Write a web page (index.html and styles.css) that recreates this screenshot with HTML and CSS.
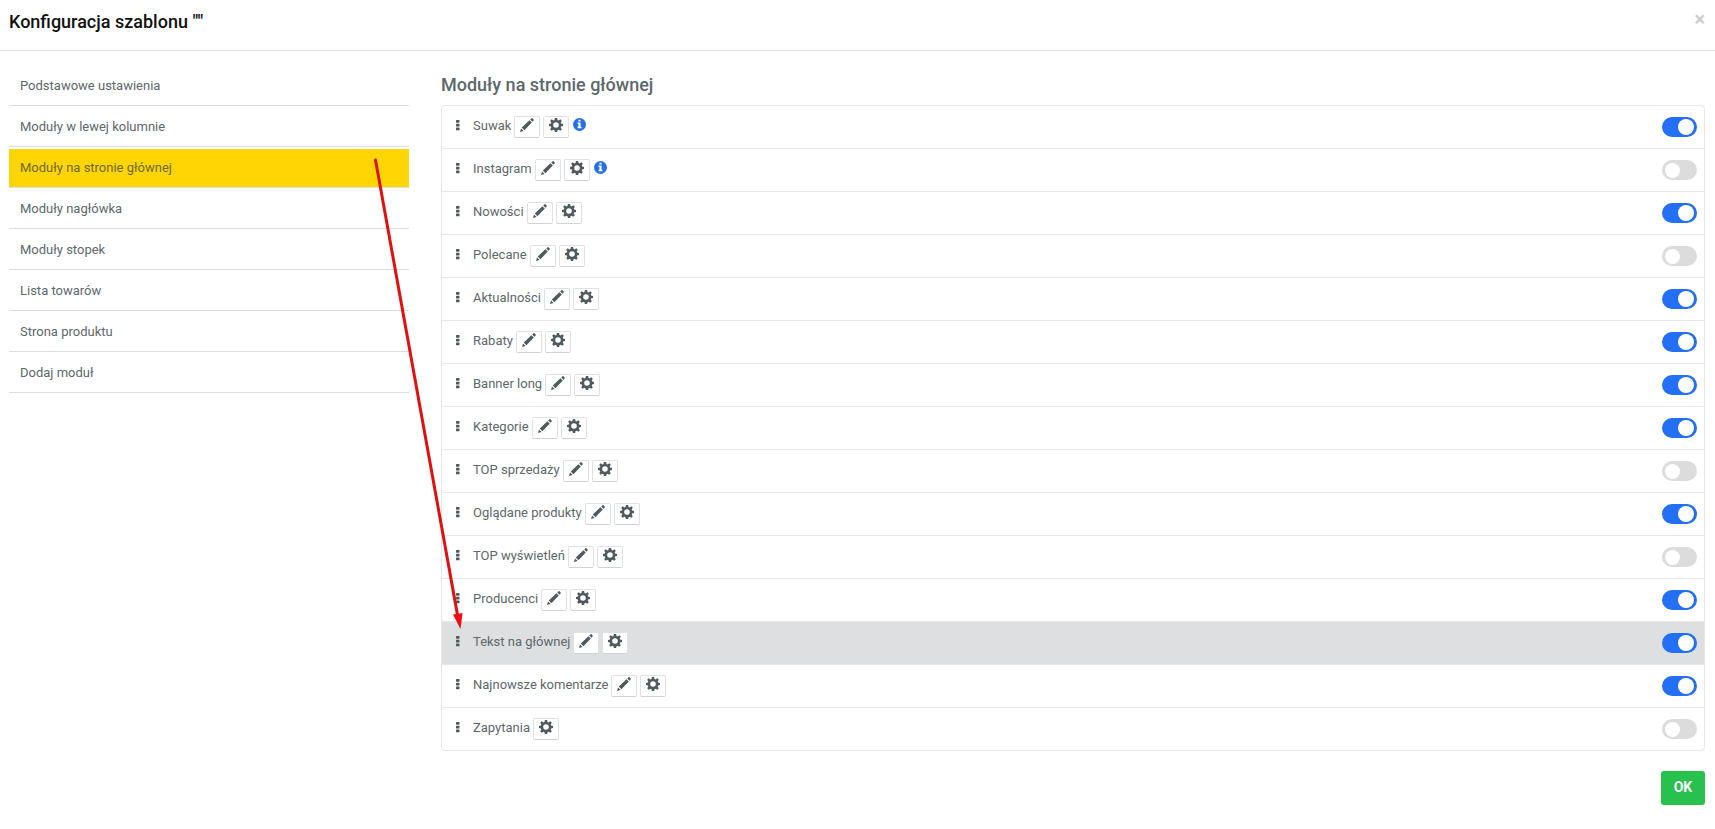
FILE: index.html
```html
<!DOCTYPE html>
<html lang="pl">
  <head>
    <meta charset="UTF-8" />
    <meta name="viewport" content="width=device-width, initial-scale=1.0" />
    <title>Konfiguracja szablonu</title>
    <link rel="stylesheet" href="styles.css">
  </head>
  <body>
    <!-- icons -->
    <svg class="sprite" aria-hidden="true">
      <symbol id="i-drag" viewBox="0 0 4 12">
        <rect x="0" y="1" width="3.500" height="2.700" rx=".6" />
        <rect x="0" y="4.800" width="3.500" height="2.700" rx=".6" />
        <rect x="0" y="8.600" width="3.500" height="2.700" rx=".6" />
      </symbol>
      <symbol id="i-pencil" viewBox="0 0 14 14">
        <path d="M0 14l1-3.6 2.6 2.6zM1.8 9.4l7.6-7.2 2.4 2.4-7.4 7.6zM10.2 1.5l1.2-1.1c.4-.4.8-.4 1.2 0l1 1c.4.4.4.8 0 1.2l-1.1 1.2z" />
      </symbol>
      <symbol id="i-gear" viewBox="0 0 14 14">
        <path fill-rule="evenodd" d="M5.9 0h2.2l.4 1.9 1.1.5 1.7-1.1 1.5 1.5-1.1 1.7.4 1.1 1.9.4v2.1l-1.9.4-.4 1.1 1.1 1.7-1.5 1.5-1.7-1.1-1.1.5L8.1 14H5.9l-.4-1.8-1.1-.5-1.7 1.1-1.5-1.5 1.100-1.700-.4-1.100L0 8.100V6l1.900-.4.4-1.100-1.100-1.700 1.500-1.500 1.700 1.100 1.100-.5zM7 4.200a2.800 2.800 0 1 0 0 5.600 2.800 2.800 0 0 0 0-5.600z" />
      </symbol>
      <symbol id="i-info" viewBox="0 0 12 12">
        <circle cx="6" cy="6" r="6" />
        <path fill="#fff" d="M5 1.500h2v1.700H5zM4.200 4.200H7v3.900h.8v1.400H4.200V8.100H5V5.600h-.8z" />
      </symbol>
    </svg>

    <header class="modal-header">
      <h1>Konfiguracja szablonu ""</h1>
      <button class="close" type="button" aria-label="Zamknij">×</button>
    </header>

    <main class="modal-body">
      <nav class="side-menu">
        <a href="#podstawowe">Podstawowe ustawienia</a>
        <a href="#lewa-kolumna">Moduły w lewej kolumnie</a>
        <a class="active" href="#strona-glowna">Moduły na stronie głównej</a>
        <a href="#naglowek">Moduły nagłówka</a>
        <a href="#stopka">Moduły stopek</a>
        <a href="#lista">Lista towarów</a>
        <a href="#produkt">Strona produktu</a>
        <a href="#dodaj">Dodaj moduł</a>
      </nav>

      <section class="modules">
        <h2>Moduły na stronie głównej</h2>
        <ul class="module-list">
          <li>
            <svg class="drag"><use href="#i-drag" /></svg>
            <label for="m1">Suwak</label>
            <button class="btn-icon" type="button" aria-label="Edytuj"><svg><use href="#i-pencil" /></svg></button>
            <button class="btn-icon" type="button" aria-label="Ustawienia"><svg><use href="#i-gear" /></svg></button>
            <svg class="info"><use href="#i-info" /></svg>
            <input class="switch" type="checkbox" id="m1" checked />
          </li>
          <li>
            <svg class="drag"><use href="#i-drag" /></svg>
            <label for="m2">Instagram</label>
            <button class="btn-icon" type="button" aria-label="Edytuj"><svg><use href="#i-pencil" /></svg></button>
            <button class="btn-icon" type="button" aria-label="Ustawienia"><svg><use href="#i-gear" /></svg></button>
            <svg class="info"><use href="#i-info" /></svg>
            <input class="switch" type="checkbox" id="m2" />
          </li>
          <li>
            <svg class="drag"><use href="#i-drag" /></svg>
            <label for="m3">Nowości</label>
            <button class="btn-icon" type="button" aria-label="Edytuj"><svg><use href="#i-pencil" /></svg></button>
            <button class="btn-icon" type="button" aria-label="Ustawienia"><svg><use href="#i-gear" /></svg></button>
            <input class="switch" type="checkbox" id="m3" checked />
          </li>
          <li>
            <svg class="drag"><use href="#i-drag" /></svg>
            <label for="m4">Polecane</label>
            <button class="btn-icon" type="button" aria-label="Edytuj"><svg><use href="#i-pencil" /></svg></button>
            <button class="btn-icon" type="button" aria-label="Ustawienia"><svg><use href="#i-gear" /></svg></button>
            <input class="switch" type="checkbox" id="m4" />
          </li>
          <li>
            <svg class="drag"><use href="#i-drag" /></svg>
            <label for="m5">Aktualności</label>
            <button class="btn-icon" type="button" aria-label="Edytuj"><svg><use href="#i-pencil" /></svg></button>
            <button class="btn-icon" type="button" aria-label="Ustawienia"><svg><use href="#i-gear" /></svg></button>
            <input class="switch" type="checkbox" id="m5" checked />
          </li>
          <li>
            <svg class="drag"><use href="#i-drag" /></svg>
            <label for="m6">Rabaty</label>
            <button class="btn-icon" type="button" aria-label="Edytuj"><svg><use href="#i-pencil" /></svg></button>
            <button class="btn-icon" type="button" aria-label="Ustawienia"><svg><use href="#i-gear" /></svg></button>
            <input class="switch" type="checkbox" id="m6" checked />
          </li>
          <li>
            <svg class="drag"><use href="#i-drag" /></svg>
            <label for="m7">Banner long</label>
            <button class="btn-icon" type="button" aria-label="Edytuj"><svg><use href="#i-pencil" /></svg></button>
            <button class="btn-icon" type="button" aria-label="Ustawienia"><svg><use href="#i-gear" /></svg></button>
            <input class="switch" type="checkbox" id="m7" checked />
          </li>
          <li>
            <svg class="drag"><use href="#i-drag" /></svg>
            <label for="m8">Kategorie</label>
            <button class="btn-icon" type="button" aria-label="Edytuj"><svg><use href="#i-pencil" /></svg></button>
            <button class="btn-icon" type="button" aria-label="Ustawienia"><svg><use href="#i-gear" /></svg></button>
            <input class="switch" type="checkbox" id="m8" checked />
          </li>
          <li>
            <svg class="drag"><use href="#i-drag" /></svg>
            <label for="m9">TOP sprzedaży</label>
            <button class="btn-icon" type="button" aria-label="Edytuj"><svg><use href="#i-pencil" /></svg></button>
            <button class="btn-icon" type="button" aria-label="Ustawienia"><svg><use href="#i-gear" /></svg></button>
            <input class="switch" type="checkbox" id="m9" />
          </li>
          <li>
            <svg class="drag"><use href="#i-drag" /></svg>
            <label for="m10">Oglądane produkty</label>
            <button class="btn-icon" type="button" aria-label="Edytuj"><svg><use href="#i-pencil" /></svg></button>
            <button class="btn-icon" type="button" aria-label="Ustawienia"><svg><use href="#i-gear" /></svg></button>
            <input class="switch" type="checkbox" id="m10" checked />
          </li>
          <li>
            <svg class="drag"><use href="#i-drag" /></svg>
            <label for="m11">TOP wyświetleń</label>
            <button class="btn-icon" type="button" aria-label="Edytuj"><svg><use href="#i-pencil" /></svg></button>
            <button class="btn-icon" type="button" aria-label="Ustawienia"><svg><use href="#i-gear" /></svg></button>
            <input class="switch" type="checkbox" id="m11" />
          </li>
          <li>
            <svg class="drag"><use href="#i-drag" /></svg>
            <label for="m12">Producenci</label>
            <button class="btn-icon" type="button" aria-label="Edytuj"><svg><use href="#i-pencil" /></svg></button>
            <button class="btn-icon" type="button" aria-label="Ustawienia"><svg><use href="#i-gear" /></svg></button>
            <input class="switch" type="checkbox" id="m12" checked />
          </li>
          <li class="selected">
            <svg class="drag"><use href="#i-drag" /></svg>
            <label for="m13">Tekst na głównej</label>
            <button class="btn-icon" type="button" aria-label="Edytuj"><svg><use href="#i-pencil" /></svg></button>
            <button class="btn-icon" type="button" aria-label="Ustawienia"><svg><use href="#i-gear" /></svg></button>
            <input class="switch" type="checkbox" id="m13" checked />
          </li>
          <li>
            <svg class="drag"><use href="#i-drag" /></svg>
            <label for="m14">Najnowsze komentarze</label>
            <button class="btn-icon" type="button" aria-label="Edytuj"><svg><use href="#i-pencil" /></svg></button>
            <button class="btn-icon" type="button" aria-label="Ustawienia"><svg><use href="#i-gear" /></svg></button>
            <input class="switch" type="checkbox" id="m14" checked />
          </li>
          <li>
            <svg class="drag"><use href="#i-drag" /></svg>
            <label for="m15">Zapytania</label>
            <button class="btn-icon" type="button" aria-label="Ustawienia"><svg><use href="#i-gear" /></svg></button>
            <input class="switch" type="checkbox" id="m15" />
          </li>
        </ul>
      </section>

      <!-- arrow from the menu item to the selected module -->
      <svg class="arrow" viewBox="0 0 96 480" aria-hidden="true">
        <path class="shaft" d="M5.500 11L87.500 466" />
        <path class="head" d="M83 465.500l9.500-1.500-2 16z" />
      </svg>
    </main>

    <footer class="modal-footer">
      <button class="btn-ok" type="button">OK</button>
    </footer>
  </body>
</html>
```

FILE: styles.css
```css
* {
  box-sizing: border-box;
}

body {
  margin: 0;
  font-family: Roboto, sans-serif;
  font-size: 13px;
  line-height: 20px;
  color: #5d686c;
  background-color: #fff;
}

button {
  font-family: inherit;
  cursor: pointer;
}

.sprite {
  display: none;
}

/* header */
.modal-header {
  display: flex;
  justify-content: space-between;
  align-items: flex-start;
  height: 51px;
  padding: 9px 10px 0 9px;
  border-bottom: 1px solid #e3e5e6;
}

.modal-header h1 {
  margin: 0;
  font-size: 18px;
  line-height: 25px;
  font-weight: 500;
  color: #111;
}

.close {
  padding: 0;
  border: 0;
  background: none;
  font-size: 20px;
  line-height: 20px;
  font-weight: 700;
  color: #ccc;
}

/* body */
.modal-body {
  position: relative;
  display: grid;
  grid-template-columns: repeat(12, 1fr);
  column-gap: 32px;
  padding: 14px 10px 0 9px;
}

.side-menu {
  grid-column: span 3;
}

.side-menu a {
  display: block;
  margin-top: 2px;
  padding: 9px 11px;
  border-bottom: 1px solid #dcdfe0;
  color: #5d686c;
  text-decoration: none;
}

.side-menu a.active {
  background-color: #ffd503;
  color: #6f6a2c;
}

.modules {
  grid-column: span 9;
}

.modules h2 {
  margin: 0;
  font-size: 18px;
  line-height: 40px;
  font-weight: 500;
}

.module-list {
  margin: 0;
  padding: 0;
  list-style: none;
  border: 1px solid #e5e7e8;
  border-radius: 4px;
}

.module-list li {
  display: flex;
  align-items: center;
  height: 43px;
  padding: 0 7px 0 14px;
  border-bottom: 1px solid #e5e7e8;
}

.module-list li:last-child {
  height: 42px;
  border-bottom: 0;
}

.module-list .selected {
  background-color: #dddfe1;
}

.drag {
  width: 4px;
  height: 12px;
  margin: 0 13px 4px 0;
  fill: #4f5a5e;
}

.module-list label {
  margin-bottom: 3px;
}

.btn-icon {
  display: flex;
  justify-content: center;
  width: 26px;
  height: 22px;
  margin-left: 3px;
  padding: 1px 0 0;
  border: 1px solid #dfe2e4;
  border-bottom-color: #cfd3d5;
  border-radius: 2px;
  background-color: #fff;
}

.btn-icon svg {
  width: 14px;
  height: 14px;
  fill: #4f5a5e;
}

.info {
  width: 13px;
  height: 13px;
  margin: 0 0 5px 4px;
  fill: #2370ea;
}

/* toggle */
.switch {
  appearance: none;
  display: flex;
  align-items: center;
  width: 35px;
  height: 20px;
  margin: 0 0 0 auto;
  padding: 0 3px;
  border-radius: 10px;
  background-color: #dcdcdc;
  cursor: pointer;
}

.switch::before {
  content: "";
  width: 15px;
  height: 15px;
  border-radius: 50%;
  background-color: #fff;
}

.switch:checked {
  justify-content: flex-end;
  background-color: #2370f6;
}

.switch:checked::before {
  width: 16px;
  height: 16px;
}

.arrow {
  position: absolute;
  top: 98px;
  left: 370px;
  width: 96px;
  height: 480px;
  pointer-events: none;
}

.arrow .shaft {
  fill: none;
  stroke: #e01010;
  stroke-width: 3;
  stroke-linecap: round;
}

.arrow .head {
  fill: #f00c0c;
}

/* footer */
.modal-footer {
  display: flex;
  justify-content: flex-end;
  padding: 20px 10px 24px;
}

.btn-ok {
  width: 44px;
  height: 34px;
  padding: 0 0 2px;
  border: 0;
  border-radius: 3px;
  background-color: #28c14d;
  font-size: 14px;
  font-weight: 700;
  color: #fff;
}
```
